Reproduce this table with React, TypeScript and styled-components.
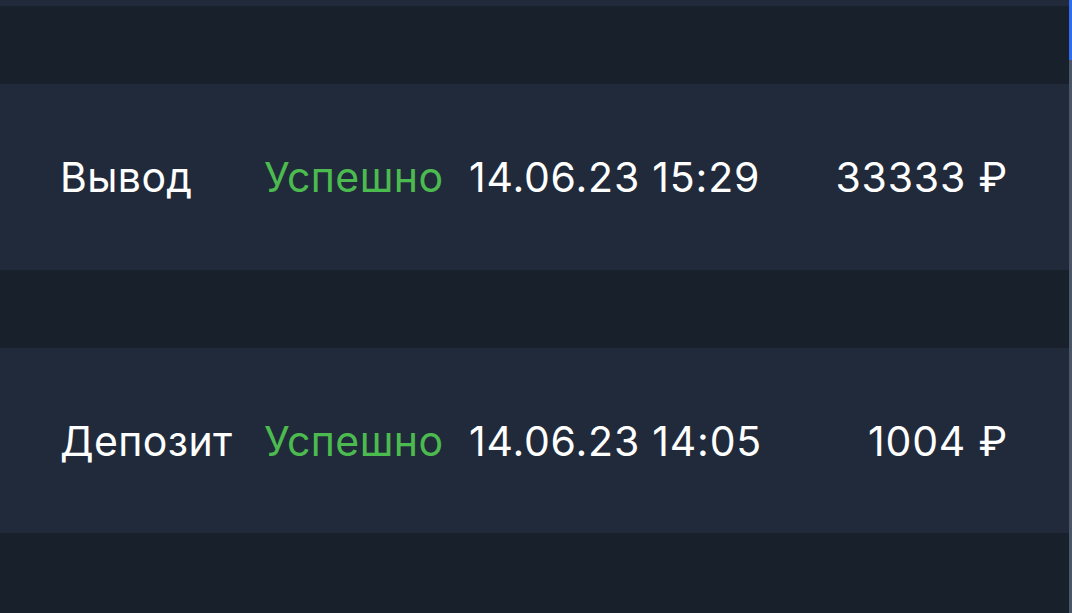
import React from "react";
import styled, { createGlobalStyle } from "styled-components";

const Global = createGlobalStyle`
  html, body { margin: 0; padding: 0; background: #18202c; }
  body { font-family: Inter, "Noto Sans", sans-serif; overflow: hidden; }
`;

const Shell = styled.div`
  display: flex;
  width: 1072px;
  height: 613px;
  background: #18202c;
`;

const Main = styled.div`
  flex: 1;
  display: flex;
  flex-direction: column;
`;

const TopBand = styled.div`
  height: 6px;
  background: #212a3a;
`;

const Gap = styled.div<{ $h: number }>`
  height: ${(p) => p.$h}px;
`;

const Row = styled.div<{ $h: number }>`
  height: ${(p) => p.$h}px;
  background: #212a3a;
  display: grid;
  grid-template-columns: 204px 205px 1fr auto;
  align-items: center;
  padding: 0 61px 0 60px;
  color: #ffffff;
  font-size: 41px;
  letter-spacing: 0.4px;
`;

const Cell = styled.div<{ $green?: boolean; $num?: boolean }>`
  color: ${(p) => (p.$green ? "#4cbb4f" : "#ffffff")};
  letter-spacing: ${(p) => (p.$num ? "0.8px" : "0.4px")};
  white-space: nowrap;
`;

const Amount = styled.div`
  text-align: right;
  letter-spacing: 0.8px;
  white-space: nowrap;
`;

const Scrollbar = styled.div`
  width: 3px;
  background: #4b5568;
  display: flex;
  flex-direction: column;
`;

const Thumb = styled.div`
  height: 60px;
  background: #2f6df0;
`;

const rows = [
  { type: "Вывод", status: "Успешно", date: "14.06.23 15:29", amount: "33333 ₽", h: 186 },
  { type: "Депозит", status: "Успешно", date: "14.06.23 14:05", amount: "1004 ₽", h: 185 },
];

export default function App() {
  return (
    <>
      <Global />
      <Shell>
        <Main>
          <TopBand />
          <Gap $h={78} />
          <Row $h={rows[0].h}>
            <Cell>{rows[0].type}</Cell>
            <Cell $green>{rows[0].status}</Cell>
            <Cell $num>{rows[0].date}</Cell>
            <Amount>{rows[0].amount}</Amount>
          </Row>
          <Gap $h={78} />
          <Row $h={rows[1].h}>
            <Cell>{rows[1].type}</Cell>
            <Cell $green>{rows[1].status}</Cell>
            <Cell $num>{rows[1].date}</Cell>
            <Amount>{rows[1].amount}</Amount>
          </Row>
        </Main>
        <Scrollbar>
          <Thumb />
        </Scrollbar>
      </Shell>
    </>
  );
}
